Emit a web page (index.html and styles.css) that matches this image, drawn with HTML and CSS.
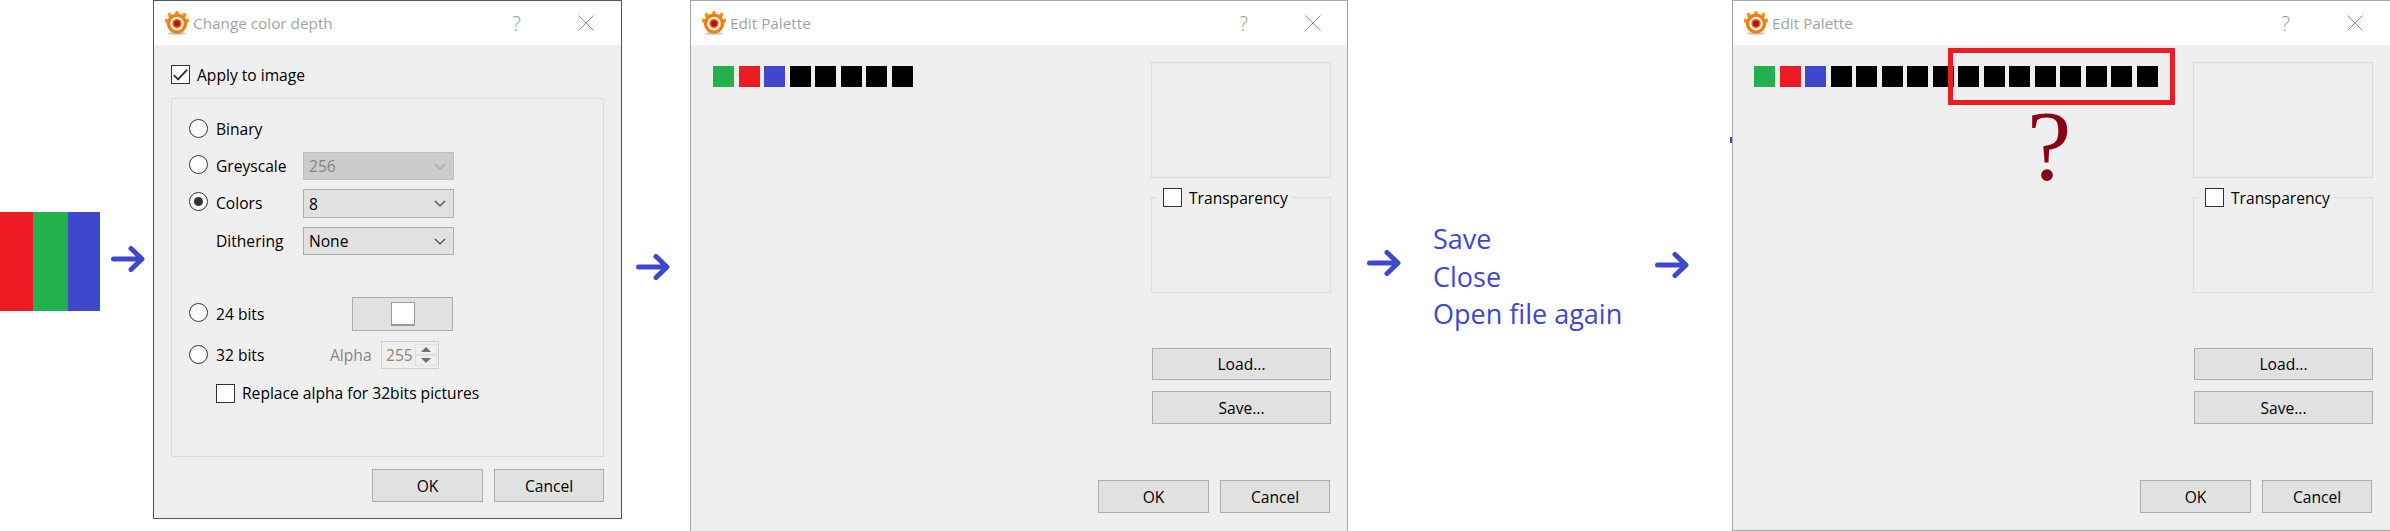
FILE: index.html
```html
<!DOCTYPE html>
<html>
    <head>
        <title>Palette steps</title>
        <link rel="stylesheet" href="styles.css">
    </head>
    <body>
        <svg class="defs" width="0" height="0">
            <symbol id="logo" viewBox="0 0 24 24">
                <ellipse cx="12" cy="22.4" rx="9.5" ry="1.4" fill="#c9c9c9" />
                <g fill="#ef9a1e">
                    <rect x="10.1" y="0" width="3.8" height="7" rx="1.6" />
                    <rect x="3.4" y="1.6" width="3.8" height="7" rx="1.6" transform="rotate(-30 5.3 5)" />
                    <rect x="16.8" y="1.6" width="3.8" height="7" rx="1.6" transform="rotate(30 18.7 5)" />
                    <rect x="0" y="7" width="3.8" height="6" rx="1.6" transform="rotate(-65 1.9 10)" />
                    <rect x="20.2" y="7" width="3.8" height="6" rx="1.6" transform="rotate(65 22.1 10)" />
                </g>
                <circle cx="12" cy="12.6" r="10.2" fill="#e8811a" />
                <circle cx="12" cy="12.6" r="6.8" fill="#fbeedd" />
                <circle cx="12" cy="12.6" r="4.6" fill="#d9641c" />
                <circle cx="12" cy="12.6" r="3" fill="#b5130f" />
            </symbol>
            <symbol id="chevron" viewBox="0 0 12 7">
                <path d="M1 1l5 5 5-5" fill="none" stroke="currentColor" stroke-width="1.2" />
            </symbol>
            <symbol id="tick" viewBox="0 0 14 12">
                <path d="M1.5 6.5l3.5 3.5 7.5-8" fill="none" stroke="#333" stroke-width="1.5" />
            </symbol>
            <symbol id="arrow" viewBox="0 0 34 26">
                <path d="M2.5 13h27M20 2.5L31 13 20 23.5" fill="none" stroke="#3f48cc" stroke-width="5" stroke-linecap="round" stroke-linejoin="round" />
            </symbol>
            <symbol id="close" viewBox="0 0 16 16">
                <path d="M.5.5l15 15M15.5.5l-15 15" fill="none" stroke="#8e8e8e" stroke-width="1" />
            </symbol>
        </svg>

        <div class="stage">
            <div class="stripes">
                <div class="stripe red"></div>
                <div class="stripe green"></div>
                <div class="stripe blue"></div>
            </div>

            <svg class="arrow arrow1"><use href="#arrow" /></svg>

            <div class="dialog depthDialog">
                <div class="titleBar">
                    <svg class="logo"><use href="#logo" /></svg>
                    <span class="titleText">Change color depth</span>
                    <span class="help">?</span>
                    <svg class="closeIcon"><use href="#close" /></svg>
                </div>
                <div class="depthBody">
                    <div class="applyRow">
                        <span class="check"><svg class="tick"><use href="#tick" /></svg></span>
                        <span class="checkText">Apply to image</span>
                    </div>
                    <div class="group">
                        <div class="row rowBinary">
                            <span class="radio"></span>
                            <span class="rowLabel">Binary</span>
                        </div>
                        <div class="row rowGrey">
                            <span class="radio"></span>
                            <span class="rowLabel">Greyscale</span>
                            <div class="select disabled">
                                <span>256</span>
                                <svg class="chevron"><use href="#chevron" /></svg>
                            </div>
                        </div>
                        <div class="row rowColors">
                            <span class="radio checked"></span>
                            <span class="rowLabel">Colors</span>
                            <div class="select">
                                <span>8</span>
                                <svg class="chevron"><use href="#chevron" /></svg>
                            </div>
                        </div>
                        <div class="row rowDither">
                            <span class="rowLabel">Dithering</span>
                            <div class="select">
                                <span>None</span>
                                <svg class="chevron"><use href="#chevron" /></svg>
                            </div>
                        </div>
                        <div class="row row24">
                            <span class="radio"></span>
                            <span class="rowLabel">24 bits</span>
                            <div class="colorBtn"><span class="colorChip"></span></div>
                        </div>
                        <div class="row row32">
                            <span class="radio"></span>
                            <span class="rowLabel">32 bits</span>
                            <span class="alphaLabel">Alpha</span>
                            <div class="spin">
                                <span>255</span>
                                <div class="spinBtns">
                                    <div class="spinBtn"><span class="triUp"></span></div>
                                    <div class="spinBtn"><span class="triDown"></span></div>
                                </div>
                            </div>
                        </div>
                        <div class="row rowReplace">
                            <span class="check"></span>
                            <span class="checkText">Replace alpha for 32bits pictures</span>
                        </div>
                    </div>
                    <div class="footer depthFooter">
                        <div class="btn btnOk">OK</div>
                        <div class="btn btnCancel">Cancel</div>
                    </div>
                </div>
            </div>

            <svg class="arrow arrow2"><use href="#arrow" /></svg>

            <div class="dialog paletteDialog">
                <div class="titleBar">
                    <svg class="logo"><use href="#logo" /></svg>
                    <span class="titleText">Edit Palette</span>
                    <span class="help">?</span>
                    <svg class="closeIcon"><use href="#close" /></svg>
                </div>
                <div class="paletteBody">
                    <div class="paletteTop">
                        <div class="swatches">
                            <div class="swatch green"></div>
                            <div class="swatch red"></div>
                            <div class="swatch blue"></div>
                            <div class="swatch"></div>
                            <div class="swatch"></div>
                            <div class="swatch"></div>
                            <div class="swatch"></div>
                            <div class="swatch"></div>
                        </div>
                        <div class="side">
                            <div class="preview"></div>
                            <div class="transBox">
                                <div class="transLegend">
                                    <span class="check"></span>
                                    <span class="checkText">Transparency</span>
                                </div>
                            </div>
                            <div class="btn sideBtn loadBtn">Load...</div>
                            <div class="btn sideBtn saveBtn">Save...</div>
                        </div>
                    </div>
                    <div class="footer paletteFooter">
                        <div class="btn btnOk">OK</div>
                        <div class="btn btnCancel">Cancel</div>
                    </div>
                </div>
            </div>

            <svg class="arrow arrow3"><use href="#arrow" /></svg>

            <div class="steps">
                <div>Save</div>
                <div>Close</div>
                <div>Open file again</div>
            </div>

            <svg class="arrow arrow4"><use href="#arrow" /></svg>

            <div class="dialog paletteDialog lastDialog">
                <div class="titleBar">
                    <svg class="logo"><use href="#logo" /></svg>
                    <span class="titleText">Edit Palette</span>
                    <span class="help">?</span>
                    <svg class="closeIcon"><use href="#close" /></svg>
                </div>
                <div class="paletteBody">
                    <div class="paletteTop">
                        <div class="swatches">
                            <div class="swatch green"></div>
                            <div class="swatch red"></div>
                            <div class="swatch blue"></div>
                            <div class="swatch"></div>
                            <div class="swatch"></div>
                            <div class="swatch"></div>
                            <div class="swatch"></div>
                            <div class="swatch"></div>
                            <div class="swatch"></div>
                            <div class="swatch"></div>
                            <div class="swatch"></div>
                            <div class="swatch"></div>
                            <div class="swatch"></div>
                            <div class="swatch"></div>
                            <div class="swatch"></div>
                            <div class="swatch"></div>
                        </div>
                        <div class="side">
                            <div class="preview"></div>
                            <div class="transBox">
                                <div class="transLegend">
                                    <span class="check"></span>
                                    <span class="checkText">Transparency</span>
                                </div>
                            </div>
                            <div class="btn sideBtn loadBtn">Load...</div>
                            <div class="btn sideBtn saveBtn">Save...</div>
                        </div>
                    </div>
                    <div class="footer paletteFooter">
                        <div class="btn btnOk">OK</div>
                        <div class="btn btnCancel">Cancel</div>
                    </div>
                </div>
                <div class="redFrame"></div>
                <div class="bigQuestion">?</div>
            </div>

            <div class="blueTick"></div>
        </div>
    </body>
</html>
```

FILE: styles.css
```css
body {
    margin: 0;
    background: #fff;
    font-family: "Open Sans", sans-serif;
    font-size: 15.6px;
    color: #000;
    overflow: hidden;
}

.defs {
    position: absolute;
}

.stage {
    position: relative;
    display: flex;
    align-items: flex-start;
    width: 2390px;
    height: 531px;
    overflow: hidden;
}

.swatch {
    flex: none;
    width: 21px;
    height: 21px;
    background: #000;
}

/* colours shared by stripes and swatches */
.red {
    background: #ed1c24;
}

.green {
    background: #22b14c;
}

.blue {
    background: #3f48cc;
}

.stripes {
    display: flex;
    flex: none;
    width: 100px;
    height: 99px;
    margin-top: 212px;
}

.stripe {
    height: 100%;
}

.stripe.red {
    width: 33px;
}

.stripe.green {
    width: 35px;
}

.stripe.blue {
    width: 32px;
}

.arrow {
    flex: none;
    width: 34px;
    height: 26px;
}

.arrow1 {
    margin: 246px 0 0 11px;
}

.arrow2 {
    margin: 254px 0 0 14px;
}

.arrow3 {
    margin: 250px 0 0 19px;
}

.arrow4 {
    margin: 252px 0 0 0;
}

.dialog {
    position: relative;
    flex: none;
    box-sizing: border-box;
    background: #efefef;
}

.depthDialog {
    width: 469px;
    height: 519px;
    margin-left: 8px;
    border: 1px solid #555;
}

.paletteDialog {
    width: 658px;
    height: 531px;
    margin-left: 20px;
    border: 1px solid #a3a6ad;
    border-bottom: none;
}

.lastDialog {
    margin-left: 43px;
    border-right: none;
    border-bottom: 1px solid #a3a6ad;
}

.titleBar {
    display: flex;
    align-items: center;
    height: 44px;
    padding-left: 11px;
    background: #fff;
}

.logo {
    flex: none;
    width: 24px;
    height: 24px;
    margin-right: 4px;
}

.titleText {
    flex: 1;
    font-size: 15.3px;
    color: #9ea3aa;
}

.help {
    font-size: 20px;
    font-weight: 300;
    color: #9a9a9a;
    margin-right: 57px;
}

.closeIcon {
    flex: none;
    width: 16px;
    height: 16px;
    margin-right: 27px;
}

.paletteDialog .closeIcon {
    margin-right: 26px;
}

.lastDialog .closeIcon {
    margin-right: 27px;
}

.depthBody {
    padding: 20px 17px 0 17px;
}

.applyRow {
    display: flex;
    align-items: center;
    height: 19px;
}

.check {
    display: block;
    flex: none;
    box-sizing: border-box;
    width: 19px;
    height: 19px;
    background: #fff;
    border: 1px solid #333;
}

.tick {
    display: block;
    width: 17px;
    height: 17px;
}

.checkText {
    margin-left: 7px;
    white-space: nowrap;
}

.group {
    box-sizing: border-box;
    height: 359px;
    margin-top: 14px;
    padding: 20px 0 0 17px;
    border: 1px solid #dcdcdc;
}

.row {
    display: flex;
    align-items: flex-start;
}

.radio {
    position: relative;
    display: block;
    flex: none;
    box-sizing: border-box;
    width: 19px;
    height: 19px;
    margin-right: 8px;
    background: #fff;
    border: 1px solid #333;
    border-radius: 50%;
}

.radio.checked:before {
    content: '';
    position: absolute;
    top: 4px;
    left: 4px;
    width: 9px;
    height: 9px;
    background: #333;
    border-radius: 50%;
}

.rowLabel {
    width: 87px;
    white-space: nowrap;
}

.rowBinary {
    height: 19px;
    line-height: 21px;
}

.rowGrey {
    height: 28px;
    margin-top: 14px;
    line-height: 28px;
}

.rowColors {
    height: 29px;
    margin-top: 9px;
    line-height: 28px;
}

.rowGrey .radio,
.rowColors .radio {
    margin-top: 3px;
}

.rowDither {
    height: 28px;
    margin-top: 9px;
    padding-left: 27px;
    line-height: 28px;
}

.row24 {
    height: 34px;
    margin-top: 42px;
    line-height: 34px;
}

.row24 .radio {
    margin-top: 6px;
}

.row32 {
    height: 28px;
    margin-top: 10px;
    line-height: 28px;
}

.row32 .radio {
    margin-top: 4px;
}

.row32 .rowLabel {
    width: 114px;
}

.rowReplace {
    height: 19px;
    margin-top: 15px;
    padding-left: 27px;
    line-height: 19px;
}

.select {
    display: flex;
    flex: none;
    align-items: center;
    justify-content: space-between;
    box-sizing: border-box;
    width: 151px;
    height: 100%;
    padding: 0 7px 0 5px;
    background: #e1e1e1;
    border: 1px solid #adadad;
    color: #000;
}

.select.disabled {
    background: #ccc;
    border-color: #bfbfbf;
    color: #858585;
}

.chevron {
    flex: none;
    width: 12px;
    height: 7px;
    color: #444;
}

.disabled .chevron {
    color: #a5a5a5;
}

.colorBtn {
    display: flex;
    align-items: center;
    justify-content: center;
    box-sizing: border-box;
    width: 101px;
    height: 34px;
    margin-left: 49px;
    background: #e1e1e1;
    border: 1px solid #adadad;
}

.colorChip {
    display: block;
    box-sizing: border-box;
    width: 24px;
    height: 24px;
    background: #fff;
    border: 1px solid #999;
    border-width: 1px 1px 2px 1px;
}

.alphaLabel {
    width: 51px;
    color: #858585;
}

.spin {
    display: flex;
    justify-content: space-between;
    box-sizing: border-box;
    width: 58px;
    height: 28px;
    padding: 2px 1px 2px 4px;
    border: 1px solid #cfcfcf;
    color: #858585;
    line-height: 22px;
}

.spinBtns {
    width: 22px;
}

.spinBtn {
    display: flex;
    align-items: center;
    justify-content: center;
    box-sizing: border-box;
    height: 11px;
    border: 1px solid #dfdfdf;
}

.triUp {
    border: 5px solid transparent;
    border-top: none;
    border-bottom: 5px solid #6e6e6e;
}

.triDown {
    border: 5px solid transparent;
    border-bottom: none;
    border-top: 5px solid #6e6e6e;
}

.footer {
    display: flex;
    justify-content: flex-end;
    gap: 11px;
}

.depthFooter {
    margin-top: 12px;
}

.btn {
    display: flex;
    align-items: center;
    justify-content: center;
    box-sizing: border-box;
    background: #e1e1e1;
    border: 1px solid #adadad;
}

.btnOk {
    width: 111px;
    height: 33px;
}

.btnCancel {
    width: 110px;
    height: 33px;
}

.paletteBody {
    padding-right: 16px;
}

.lastDialog .paletteBody {
    padding-right: 17px;
}

.paletteTop {
    display: flex;
    justify-content: space-between;
}

.swatches {
    display: flex;
    gap: 4.53px;
    margin: 21px 0 0 22px;
}

.lastDialog .swatches {
    margin-left: 21px;
}

.side {
    flex: none;
    width: 180px;
    margin-top: 17px;
}

.preview {
    box-sizing: border-box;
    height: 116px;
    border: 1px solid #dcdcdc;
}

.transBox {
    position: relative;
    box-sizing: border-box;
    height: 96px;
    margin-top: 19px;
    border: 1px solid #dcdcdc;
}

.transLegend {
    position: absolute;
    top: -10px;
    left: 5px;
    display: flex;
    align-items: center;
    height: 19px;
    padding: 0 3px 0 6px;
    background: #efefef;
}

.sideBtn {
    width: 179px;
    margin-left: 1px;
}

.loadBtn {
    height: 32px;
    margin-top: 55px;
}

.saveBtn {
    height: 33px;
    margin-top: 11px;
}

.paletteFooter {
    margin-top: 56px;
    padding-right: 1px;
}

.steps {
    flex: none;
    width: 222px;
    margin: 220px 0 0 32px;
    font-size: 27px;
    line-height: 37.5px;
    color: #3f48cc;
}

.redFrame {
    position: absolute;
    top: 47px;
    left: 215px;
    box-sizing: border-box;
    width: 227px;
    height: 57px;
    border: 5px solid #ed1c24;
}

.bigQuestion {
    position: absolute;
    top: 87px;
    left: 294px;
    font-family: "Liberation Serif", serif;
    font-size: 100px;
    line-height: 115px;
    color: #880015;
}

.blueTick {
    position: absolute;
    top: 137px;
    left: 1730px;
    width: 2px;
    height: 6px;
    background: #3f48cc;
}
```
